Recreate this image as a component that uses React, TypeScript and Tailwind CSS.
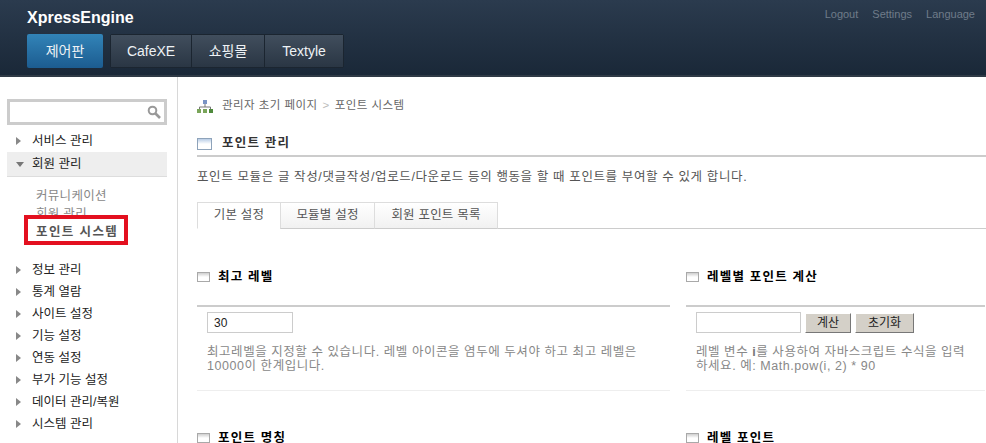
const font = "[font-family:'Liberation_Sans','Noto_Sans_CJK_KR',sans-serif]";

const topMenu = [
  { label: "CafeXE", w: "w-[81px] border-r border-[#1b2530]" },
  { label: "쇼핑몰", w: "w-[73px] border-r border-[#1b2530]" },
  { label: "Textyle", w: "w-[78px]" },
];
const tabs = [
  { label: "기본 설정", w: "w-[84px]", on: true },
  { label: "모듈별 설정", w: "w-[95px]", on: false },
  { label: "회원 포인트 목록", w: "w-[124px]", on: false },
];
const menuTop = ["서비스 관리"];
const menuBottom = ["정보 관리", "통계 열람", "사이트 설정", "기능 설정", "연동 설정", "부가 기능 설정", "데이터 관리/복원", "시스템 관리"];

function WinIcon({ big }: { big?: boolean }) {
  return (
    <span className={`block shrink-0 border bg-gradient-to-b ${big ? "w-[15px] h-[12px] border-[#8ea3ba] from-[#b9cde6] via-white to-white" : "w-[13px] h-[10px] border-[#a9a9a9] from-[#cfcfcf] via-white to-white"}`} />
  );
}

function Arrow({ open }: { open?: boolean }) {
  return open ? (
    <span className="block w-0 h-0 border-x-[4px] border-x-transparent border-t-[5px] border-t-[#777]" />
  ) : (
    <span className="block w-0 h-0 ml-[16px] border-y-[4px] border-y-transparent border-l-[5px] border-l-[#888]" />
  );
}

function MenuRow({ label }: { label: string }) {
  return (
    <li className="h-[22px] flex items-center text-[12.5px] text-[#222]">
      <span className="w-[32px] flex"><Arrow /></span>
      <span className="pt-[1px]">{label}</span>
    </li>
  );
}

function SectionHead({ title }: { title: string }) {
  return (
    <div className="flex items-center gap-[8px] h-[20px]">
      <WinIcon />
      <span className="text-[12.5px] font-bold text-black tracking-[1.2px]">{title}</span>
    </div>
  );
}

function Section({ title, w, children }: { title: string; w: string; children: React.ReactNode }) {
  return (
    <section className={w}>
      <SectionHead title={title} />
      <div className="mt-[18px] border-t-2 border-[#ccc] h-[86px] border-b border-b-[#eee] pl-[10px] pt-[5px]">{children}</div>
    </section>
  );
}

export default function App() {
  return (
    <div className={`relative w-[986px] h-[443px] overflow-hidden bg-white ${font}`}>
      <header className="h-[77px] bg-gradient-to-b from-[#2b3b4e] to-[#1a2838] border-b-2 border-[#2f3a46] pl-[27px] pr-[11px] flex justify-between">
        <div>
          <h1 className="pt-[8px] text-[16px] leading-[19px] font-bold text-white">XpressEngine</h1>
          <nav className="mt-[7px] flex gap-[7px] text-[14px] text-[#eef2f5]">
            <span className="w-[76px] h-[34px] flex items-center justify-center rounded-[2px] bg-gradient-to-b from-[#3284b8] to-[#1c5c90]">제어판</span>
            <div className="flex rounded-[2px] border border-[#1b2530]">
              {topMenu.map((m) => (
                <span key={m.label} className={`h-[32px] flex items-center justify-center bg-gradient-to-b from-[#414e5d] to-[#2a3644] ${m.w}`}>{m.label}</span>
              ))}
            </div>
          </nav>
        </div>
        <div className="pt-[8px] flex gap-[14px] text-[11px] leading-[13px] text-[#6f7c89]">
          <span>Logout</span>
          <span>Settings</span>
          <span>Language</span>
        </div>
      </header>

      <div className="flex h-[366px]">
        <aside className="w-[178px] shrink-0 border-r border-[#d8d8d8] pt-[22px]">
          <div className="ml-[7px] w-[160px] h-[26px] border-[3px] border-[#ccc] flex items-center justify-end pr-[3px]">
            <svg width="14" height="14" viewBox="0 0 14 14" fill="none" stroke="#999" strokeWidth="2"><circle cx="5.5" cy="5.5" r="3.8" /><path d="M8.5 8.5 13 13" strokeWidth="2.6" /></svg>
          </div>
          <ul className="mt-[5px]">
            {menuTop.map((m) => <MenuRow key={m} label={m} />)}
            <li className="ml-[7px] w-[160px] h-[25px] flex items-center bg-[#eee] border-b border-[#ddd] text-[12.5px] text-[#222]">
              <span className="w-[16px] ml-[9px] flex"><Arrow open /></span>
              <span className="pt-[1px]">회원 관리</span>
            </li>
          </ul>
          <ul className="pt-[10px] pl-[36px] text-[12.5px] leading-[18px] text-[#888]">
            <li className="tracking-[0.3px]">커뮤니케이션</li>
            <li className="tracking-[0.3px]">회원 관리</li>
            <li className="font-bold text-[#555] tracking-[1.4px]">포인트 시스템</li>
          </ul>
          <ul className="mt-[18px]">
            {menuBottom.map((m) => <MenuRow key={m} label={m} />)}
          </ul>
        </aside>

        <main className="flex-1 pl-[19px] pt-[19px] min-w-0">
          <div className="flex items-center h-[20px] text-[11.5px] text-[#666] tracking-[0.45px]">
            <svg width="16" height="13" viewBox="0 0 16 13" className="mr-[9px]">
              <rect x="6" y="0" width="4" height="4" fill="#7a94c4" />
              <path d="M8 4v3M2.5 9V7h11v2" stroke="#777" fill="none" />
              <rect x="0" y="9" width="4" height="4" fill="#7aa55a" />
              <rect x="6" y="9" width="4" height="4" fill="#7aa55a" />
              <rect x="12" y="9" width="4" height="4" fill="#4f8a3c" />
            </svg>
            <span>관리자 초기 페이지</span>
            <span className="mx-[5px] text-[#bbb]">&gt;</span>
            <span>포인트 시스템</span>
          </div>
          <div className="mt-[17px] h-[21px] flex items-center gap-[10px] border-b-2 border-[#ccc] pb-[1px] box-content">
            <WinIcon big />
            <span className="text-[12.5px] font-bold text-[#333] tracking-[1.2px]">포인트 관리</span>
          </div>
          <p className="mt-[12px] text-[12.5px] leading-[16px] text-[#555] tracking-[0.62px] whitespace-nowrap">포인트 모듈은 글 작성/댓글작성/업로드/다운로드 등의 행동을 할 때 포인트를 부여할 수 있게 합니다.</p>
          <div className="mt-[17px] h-[27px] flex border-b border-[#ccc]">
            {tabs.map((t) => (
              <span key={t.label} className={`${t.w} h-[27px] flex items-center justify-center border border-[#ddd] -ml-px first:ml-0 text-[12.5px] text-[#555] tracking-[0.2px] ${t.on ? "bg-white border-b-white" : "bg-gradient-to-b from-white to-[#f1f1f1] border-b-[#ccc]"}`}>{t.label}</span>
            ))}
          </div>
          <div className="mt-[38px] flex gap-[16px]">
            <Section title="최고 레벨" w="w-[473px]">
              <input readOnly value="30" className="block w-[86px] h-[21px] border border-[#ccc] pl-[6px] text-[12px] text-[#222] outline-none" />
              <p className="mt-[12px] text-[12.5px] leading-[14px] text-[#888] tracking-[0.55px] whitespace-nowrap">최고레벨을 지정할 수 있습니다. 레벨 아이콘을 염두에 두셔야 하고 최고 레벨은<br />10000이 한계입니다.</p>
            </Section>
            <Section title="레벨별 포인트 계산" w="w-[299px]">
              <div className="flex items-center">
                <input readOnly className="block w-[105px] h-[21px] border border-[#ccc] outline-none" />
                <button className="ml-[4px] w-[46px] h-[20px] bg-[#d4d0c8] border border-[#fff] border-r-[#777] border-b-[#777] text-[12px] text-[#222]">계산</button>
                <button className="ml-[4px] w-[59px] h-[20px] bg-[#d4d0c8] border border-[#fff] border-r-[#777] border-b-[#777] text-[12px] text-[#222]">초기화</button>
              </div>
              <p className="mt-[12px] text-[12.5px] leading-[14px] text-[#888] tracking-[0.55px] whitespace-nowrap">레벨 변수 <b className="text-[#777]">i</b>를 사용하여 자바스크립트 수식을 입력<br />하세요. 예: Math.pow(i, 2) * 90</p>
            </Section>
          </div>
          <div className="mt-[37px] flex gap-[16px]">
            <div className="w-[473px]"><SectionHead title="포인트 명칭" /></div>
            <div className="w-[299px]"><SectionHead title="레벨 포인트" /></div>
          </div>
        </main>
      </div>

      <div className="absolute left-[24px] top-[215px] w-[104px] h-[30px] border-[4px] border-[#e3101f]" />
    </div>
  );
}
